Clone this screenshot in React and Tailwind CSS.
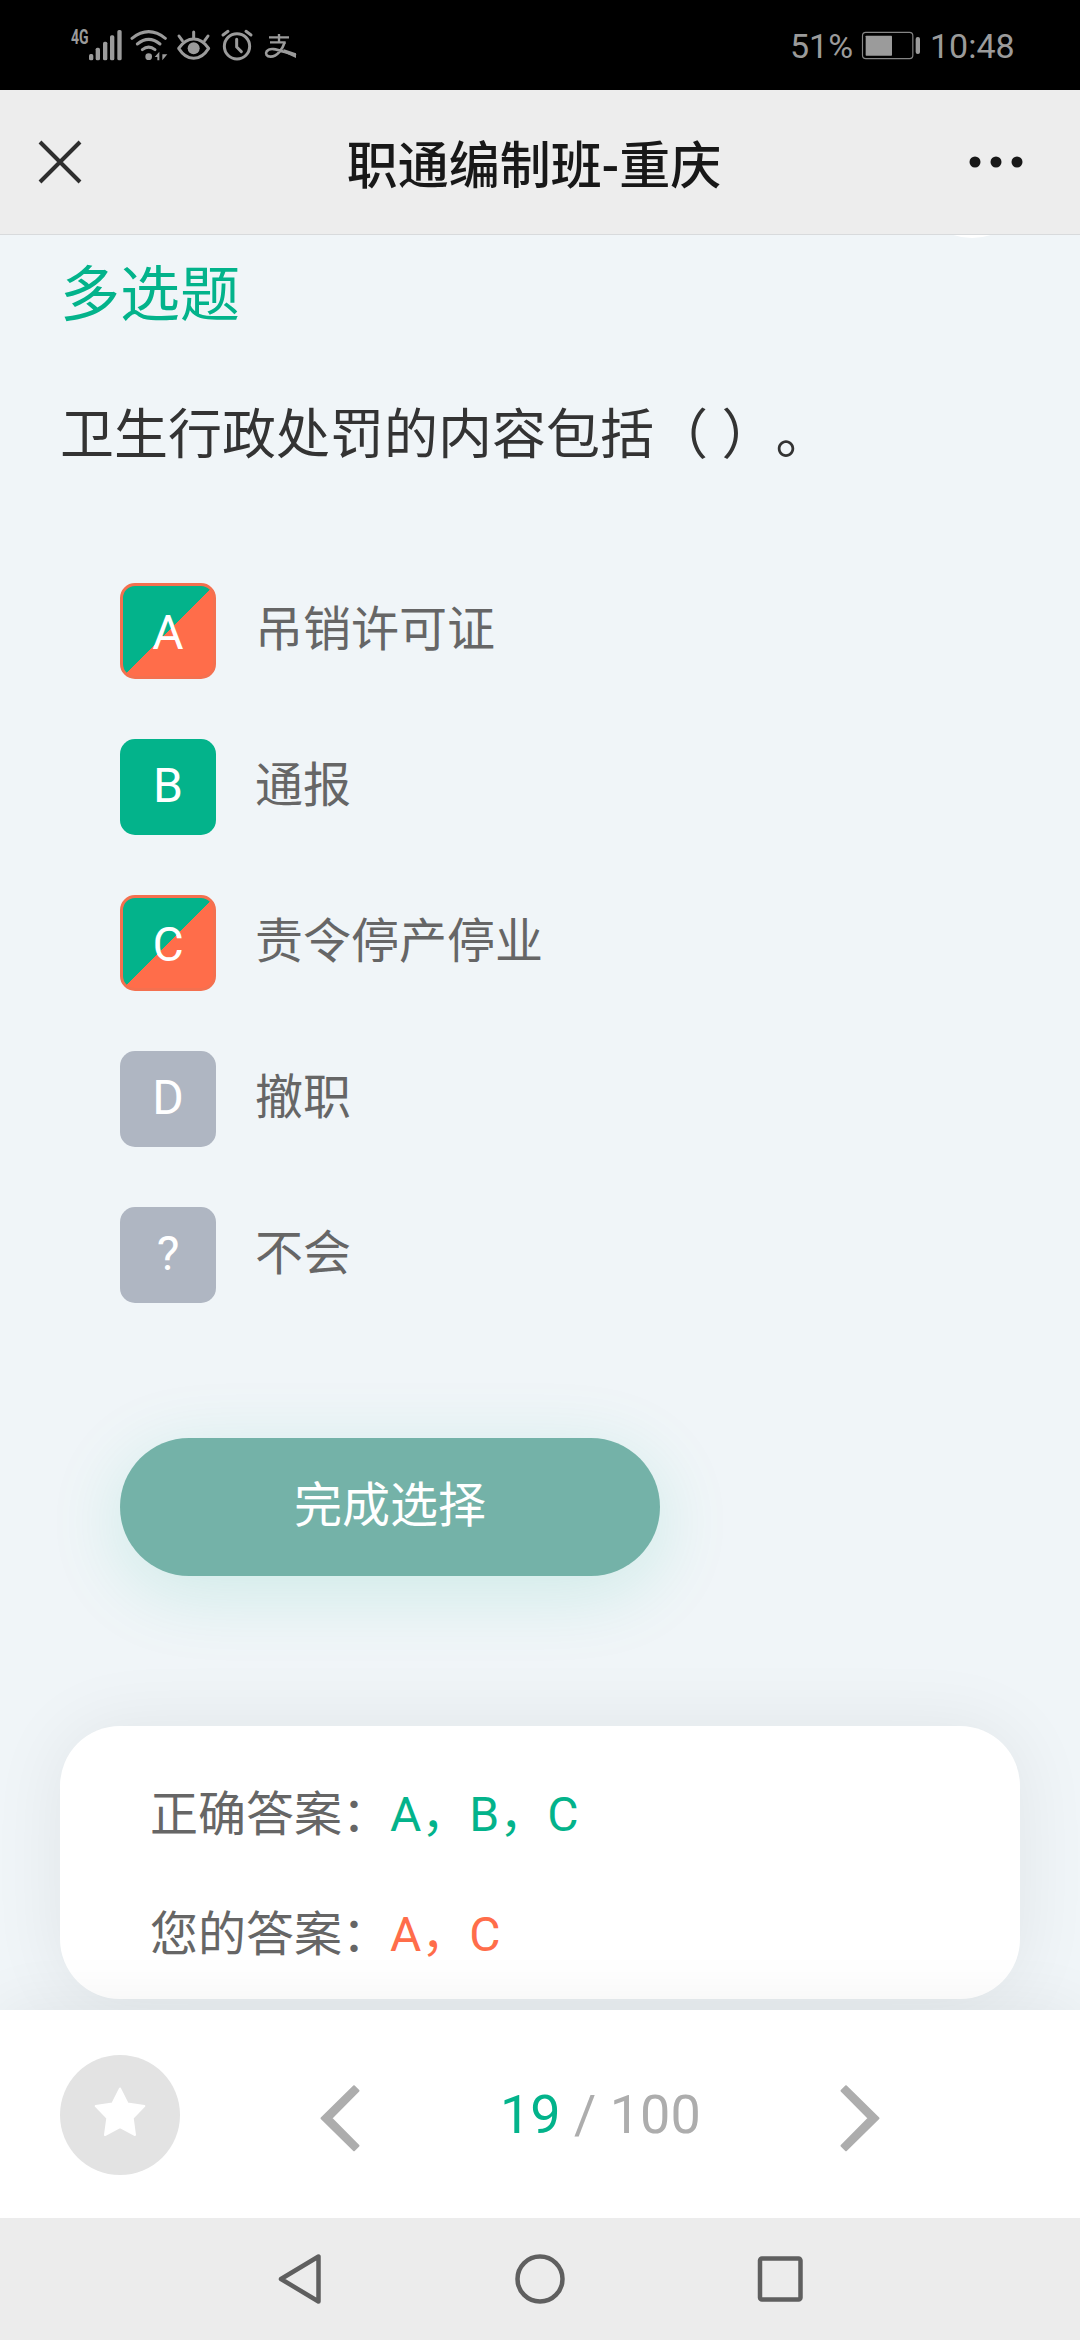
const OPTIONS = [
  { key: 'A', text: '吊销许可证', state: 'chosen' },
  { key: 'B', text: '通报', state: 'correct' },
  { key: 'C', text: '责令停产停业', state: 'chosen' },
  { key: 'D', text: '撤职', state: 'idle' },
  { key: '?', text: '不会', state: 'idle' },
];

const BADGE = {
  chosen:
    'border-[3px] border-[#f4704f] bg-[linear-gradient(135deg,#03b38b_50%,#ff6d4a_50.5%)]',
  correct: 'bg-[#03b38b]',
  idle: 'bg-[#afb6c2]',
};

function StatusBar() {
  return (
    <div className="flex h-[90px] shrink-0 items-start bg-black pl-[71px] text-[#9b9b9b]">
      <span className="mt-[28px] w-[18px] origin-left scale-x-[0.7] text-[20px] leading-[18px] font-bold whitespace-nowrap">
        4G
      </span>
      <svg className="mt-[28px] h-[34px] w-[34px]" viewBox="117 84 102 102" fill="currentColor">
        <rect x="117" y="162" width="13" height="19" rx="5" />
        <rect x="137" y="143" width="13" height="38" rx="5" />
        <rect x="159" y="125" width="13" height="56" rx="5" />
        <rect x="180" y="106" width="13" height="75" rx="5" />
        <rect x="202" y="90" width="13" height="91" rx="5" />
      </svg>
      <svg
        className="mt-[28px] ml-[7px] h-[34px] w-[38px]"
        viewBox="240 84 114 102"
        fill="none"
        stroke="currentColor"
        strokeWidth="9"
        strokeLinecap="round"
      >
        <path d="M246 115 Q296 75 346 115" />
        <path d="M262 132 Q296 104 330 132" />
        <path d="M277 149 Q296 134 315 149" />
        <circle cx="296" cy="170" r="10" fill="currentColor" stroke="none" />
        <path d="M328 155V181H322V171H314ZM337 181V155V163H352Z" fill="currentColor" stroke="none" />
      </svg>
      <svg
        className="mt-[28px] ml-[8px] h-[34px] w-[36px]"
        viewBox="378 84 108 102"
        fill="none"
        stroke="currentColor"
        strokeWidth="9"
        strokeLinecap="round"
      >
        <path d="M386 145C400 125 414 117 431 117S462 125 476 145C462 167 448 175 431 175S400 167 386 145Z" strokeLinejoin="round" />
        <circle cx="431" cy="145" r="18" fill="currentColor" stroke="none" />
        <path d="M431 96V114M387 108L397 122M474 108L464 122" />
      </svg>
      <svg
        className="mt-[28px] ml-[8px] h-[34px] w-[34px]"
        viewBox="510 84 102 102"
        fill="none"
        stroke="currentColor"
        strokeWidth="9"
        strokeLinecap="round"
      >
        <circle cx="561" cy="139" r="38" />
        <path d="M560 118V141L574 155M519 105L534 94M588 94L603 105" />
      </svg>
      <svg
        className="mt-[28px] ml-[8px] h-[34px] w-[36px]"
        viewBox="636 84 108 102"
        fill="none"
        stroke="currentColor"
        strokeWidth="7"
      >
        <path d="M657 112H717M687 102V128M660 127H707" />
        <path
          d="M704 127C698 146 682 170 662 170C650 170 645 162 650 154C662 138 688 152 738 166"
          strokeWidth="8"
        />
        <path d="M700 147L738 160V174L704 158Z" fill="currentColor" stroke="none" />
      </svg>
      <span className="mt-[26px] ml-[492px] w-[62px] text-[34px] leading-[40px] whitespace-nowrap">51%</span>
      <svg className="mt-[30px] ml-[9px] h-[30px] w-[60px]" viewBox="303 90 180 90">
        <rect x="307.500" y="97" width="151" height="79" rx="10" fill="none" stroke="#858585" strokeWidth="3.500" />
        <rect x="317" y="107" width="79" height="60" rx="2" fill="currentColor" />
        <rect x="467" y="111" width="13" height="51" rx="6" fill="currentColor" />
      </svg>
      <span className="mt-[26px] ml-[9px] text-[34px] leading-[40px] whitespace-nowrap">10:48</span>
    </div>
  );
}

function Header() {
  return (
    <header className="flex h-[145px] shrink-0 items-center justify-between border-b border-[#d8dadc] bg-[#ededed] pr-[57px] pl-[38px] text-[#181818]">
      <svg className="h-[44px] w-[44px]" viewBox="0 0 44 44" fill="none" stroke="#2e2e2e" strokeWidth="4">
        <path d="M2 2L42 42M42 2L2 42" />
      </svg>
      <h1 className="mt-[9px] ml-[17px] text-[51px] leading-[60px] font-medium">职通编制班-重庆</h1>
      <svg className="h-[12px] w-[54px]" viewBox="0 0 54 12" fill="currentColor">
        <circle cx="6" cy="6" r="5.500" />
        <circle cx="27" cy="6" r="5.500" />
        <circle cx="48" cy="6" r="5.500" />
      </svg>
    </header>
  );
}

function Option({ item }) {
  return (
    <li className="flex h-[96px] items-start">
      <span
        className={`flex h-[96px] w-[96px] justify-center rounded-[15px] text-[48px] leading-[93px] text-white ${BADGE[item.state]}`}
      >
        {item.key}
      </span>
      <span className="ml-[39px] text-[48px] leading-[93px] text-[#666]">{item.text}</span>
    </li>
  );
}

function Footer() {
  return (
    <footer className="relative flex h-[208px] shrink-0 items-start bg-white pl-[60px] shadow-[0_0_60px_rgba(0,0,0,0.07)]">
      <button className="mt-[45px] flex h-[120px] w-[120px] items-center justify-center rounded-full bg-[#e3e3e3]">
        <svg className="mt-[-8px] h-[52px] w-[52px]" viewBox="0 0 52 52" fill="#fff" stroke="#fff" strokeWidth="2" strokeLinejoin="round">
          <path d="M26 3.500L33.700 18.600L50.300 21L38.700 33L41 50L26 42L11 50L13.300 33L1.700 21L18.300 18.600Z" />
        </svg>
      </button>
      <svg className="mt-[74px] ml-[140px] h-[70px] w-[40px]" viewBox="0 0 40 70" fill="#adadad" stroke="#adadad" strokeWidth="2" strokeLinejoin="round">
        <path d="M1.500 34.300L34 2.300L38.500 6.800L11.300 34.300L38.500 61.800L34 66.300Z" />
      </svg>
      <div className="mt-[74px] ml-[140px] w-[200px] text-[54px] leading-[61px] whitespace-nowrap text-[#adadad]">
        <span className="text-[#03b38b]">19</span> / 100
      </div>
      <svg className="mt-[74px] ml-[140px] h-[70px] w-[40px]" viewBox="0 0 40 70" fill="#adadad" stroke="#adadad" strokeWidth="2" strokeLinejoin="round">
        <path d="M38.500 34.300L6 2.300L1.500 6.800L28.700 34.300L1.500 61.800L6 66.300Z" />
      </svg>
    </footer>
  );
}

function SystemNav() {
  return (
    <nav className="relative flex h-[122px] shrink-0 items-center justify-center gap-[190px] bg-[#ececec] text-[#5f5f5f]">
      <svg className="h-[52px] w-[50px]" viewBox="0 0 50 52" fill="none" stroke="currentColor" strokeWidth="4.500" strokeLinejoin="round">
        <path d="M43.500 3.500V48.500L6 26Z" />
      </svg>
      <svg className="h-[52px] w-[50px]" viewBox="0 0 50 52" fill="none" stroke="currentColor" strokeWidth="4.500">
        <circle cx="25" cy="26" r="22.500" />
      </svg>
      <svg className="h-[52px] w-[50px]" viewBox="0 0 50 52" fill="none" stroke="currentColor" strokeWidth="4.500">
        <rect x="5" y="5.500" width="40.500" height="41" rx="2" />
      </svg>
    </nav>
  );
}

export default function App() {
  return (
    <div className="flex h-[2340px] w-[1080px] flex-col overflow-hidden bg-[#f0f5f8] font-['Roboto','Noto_Sans_CJK_SC',sans-serif] [text-spacing-trim:space-all]">
      <StatusBar />
      <Header />
      <main className="relative flex h-[1775px] shrink-0 flex-col overflow-hidden px-[60px] pt-[31px]">
        <div className="absolute top-[-117px] left-[912px] h-[120px] w-[120px] rounded-full bg-white" />
        <h2 className="text-[60px] leading-[60px] text-[#03b38b]">多选题</h2>
        <p className="mt-[70px] text-[54px] leading-[80px] text-[#333]">卫生行政处罚的内容包括（ ）。</p>
        <ul className="mt-[107px] flex flex-col gap-[60px] pl-[60px]">
          {OPTIONS.map((item) => (
            <Option key={item.key} item={item} />
          ))}
        </ul>
        <button className="mt-[135px] ml-[60px] flex h-[138px] w-[540px] shrink-0 items-start justify-center rounded-full bg-[#74b2a8] text-[48px] leading-[135px] text-white shadow-[0_15px_75px_rgba(3,179,139,0.15)]">
          完成选择
        </button>
        <section className="mt-[150px] h-[273px] shrink-0 rounded-[60px] bg-white pt-[29px] pl-[90px] text-[48px] leading-[120px] text-[#666] shadow-[0_0_75px_rgba(0,0,0,0.07)]">
          <p>
            正确答案：<span className="text-[#03b38b]">A，B，C</span>
          </p>
          <p>
            您的答案：<span className="text-[#ff6d4a]">A，C</span>
          </p>
        </section>
      </main>
      <Footer />
      <SystemNav />
    </div>
  );
}
